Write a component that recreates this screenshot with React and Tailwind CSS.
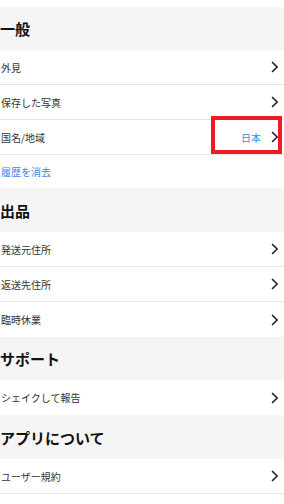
import React from 'react';

const Chevron = () => (
  <svg width="8" height="12" viewBox="0 0 8 12" fill="none" className="shrink-0">
    <path d="M1.5 1.5L6.2 6L1.5 10.5" stroke="#222" strokeWidth="1.7" strokeLinecap="round" strokeLinejoin="round" />
  </svg>
);

function SectionHeader({ title, h = 'h-[44px]' }) {
  return (
    <div className={`${h} bg-[#f5f5f5] flex items-center`}>
      <h2 className="text-[15px] font-bold text-[#111] leading-none">{title}</h2>
    </div>
  );
}

function Row({ label, value, border = true, highlight = false }) {
  return (
    <div
      className={`relative h-[35px] flex items-center justify-between pl-[1px] pr-[5px] ${
        border ? 'border-b border-[#e6e6e6]' : ''
      }`}
    >
      <span className="text-[10px] text-[#333]">{label}</span>
      <div className="flex items-center gap-[10px]">
        {value && <span className="text-[10px] text-[#3a86e8]">{value}</span>}
        <Chevron />
      </div>
      {highlight && (
        <div className="absolute right-[2px] top-[-4px] w-[71px] h-[38px] border-4 border-[#ed1c24]" />
      )}
    </div>
  );
}

export default function App() {
  return (
    <div
      className="w-[284px] h-[504px] overflow-hidden bg-white"
      style={{ fontFamily: '"Noto Sans CJK JP", "Noto Sans", sans-serif' }}
    >
      <div className="h-[7px]" />
      {/* 一般 */}
      <SectionHeader title="一般" h="h-[43px]" />
      <Row label="外見" />
      <Row label="保存した写真" />
      <Row label="国名/地域" value="日本" highlight />
      <div className="h-[33px] flex items-center pl-[1px]">
        <button className="text-[10px] text-[#3a86e8]">履歴を消去</button>
      </div>

      {/* 出品 */}
      <SectionHeader title="出品" />
      <Row label="発送元住所" />
      <Row label="返送先住所" />
      <Row label="臨時休業" border={false} />

      {/* サポート */}
      <SectionHeader title="サポート" h="h-[43px]" />
      <Row label="シェイクして報告" border={false} />

      {/* アプリについて */}
      <SectionHeader title="アプリについて" />
      <Row label="ユーザー規約" />
      <Row label="プライバシーポリシー" />
    </div>
  );
}
